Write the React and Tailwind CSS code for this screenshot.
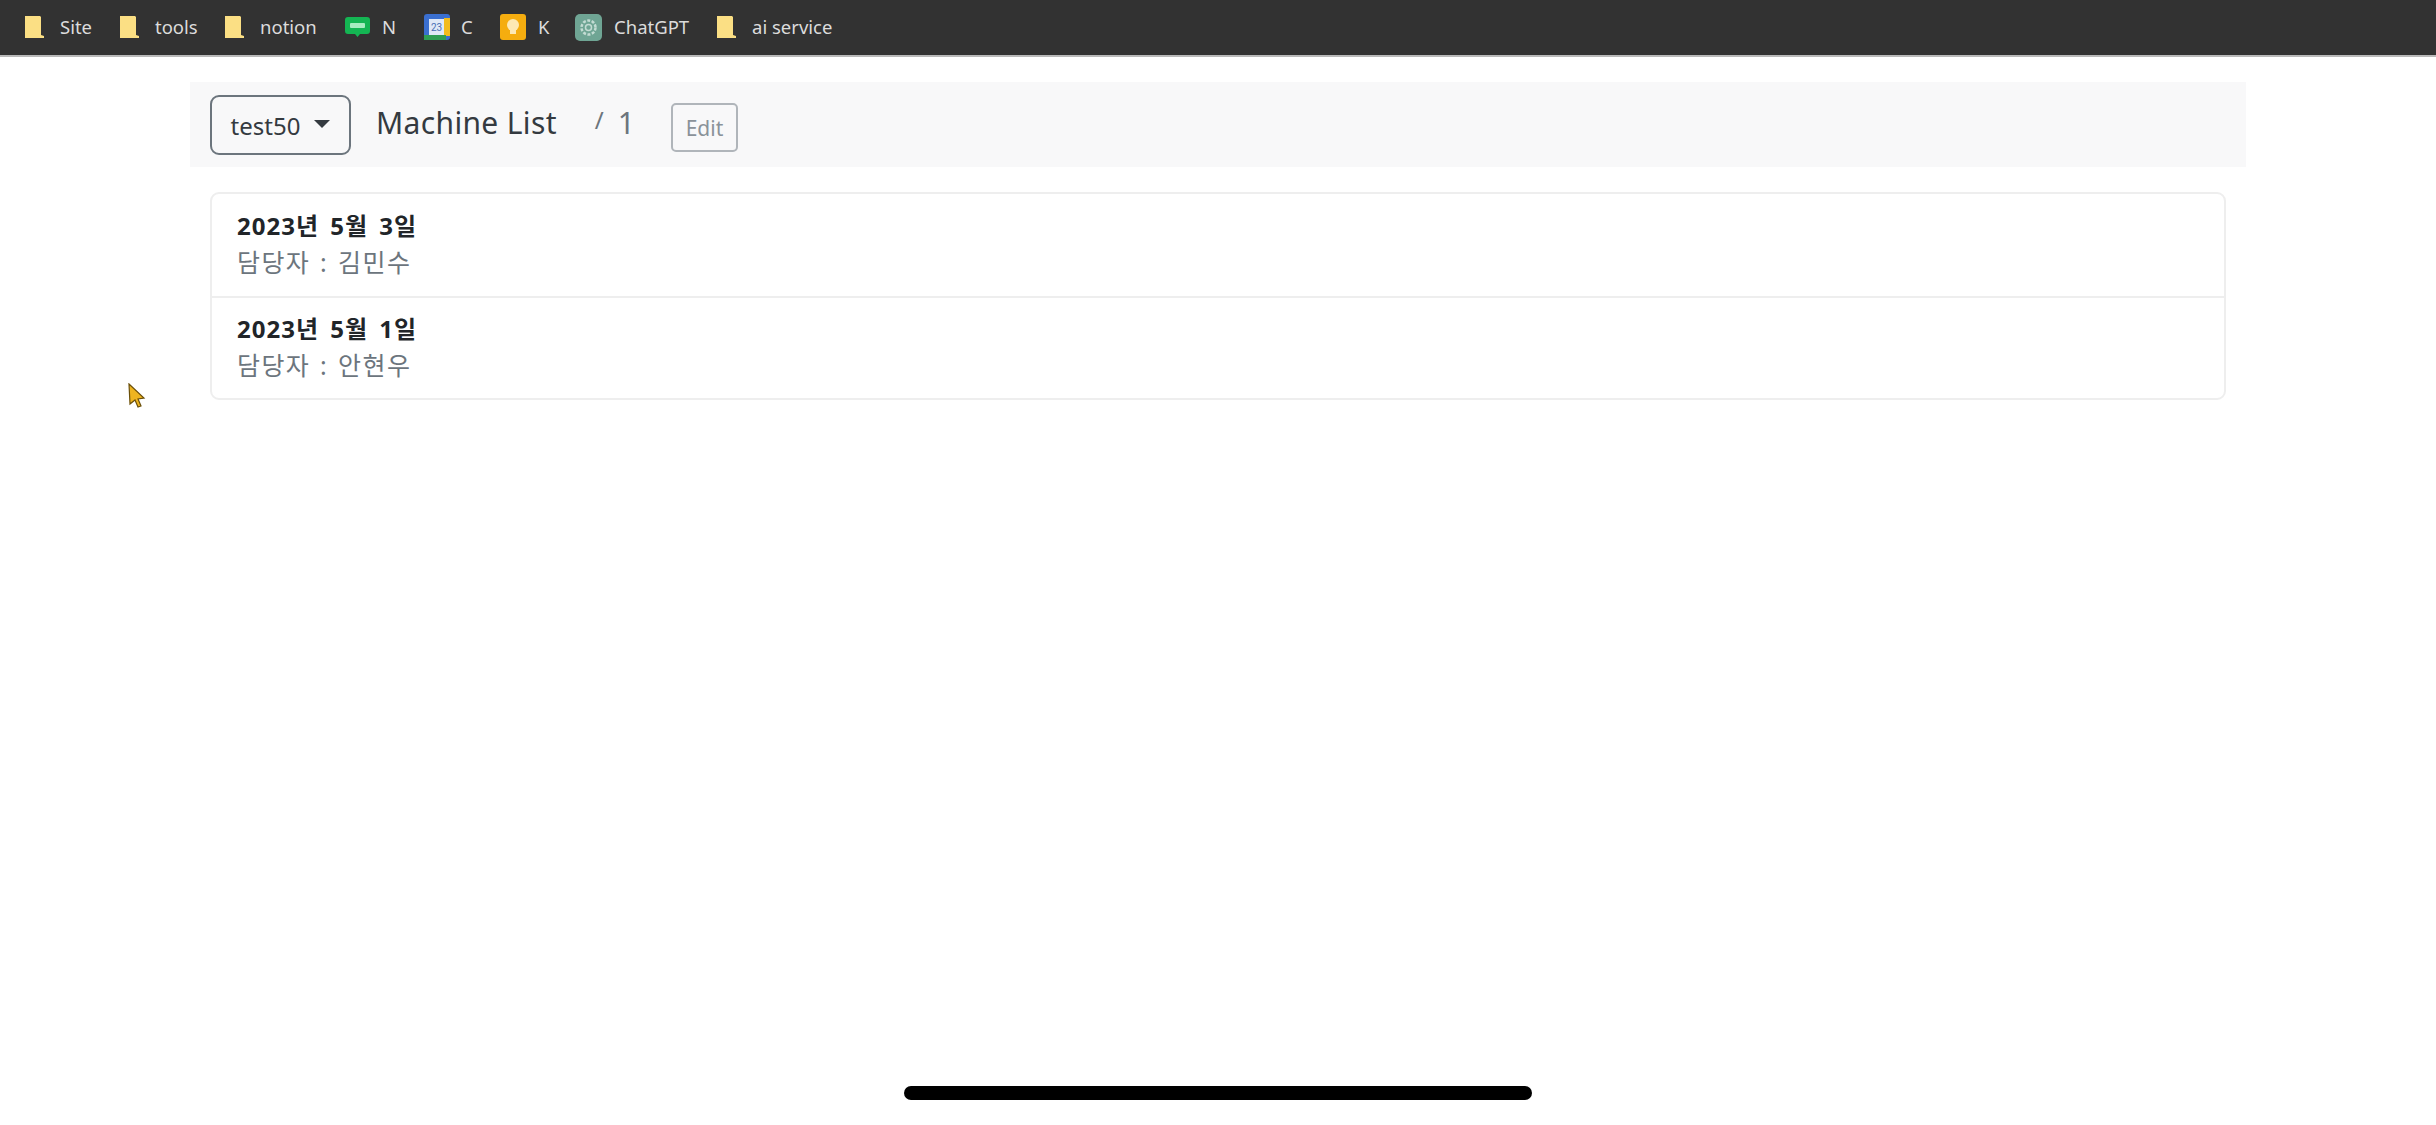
const font = 'font-["Noto_Sans","Noto_Sans_CJK_KR",sans-serif]';

function FolderIcon() {
  return (
    <svg width="21" height="24" viewBox="0 0 21 24" className="shrink-0">
      <path d="M1 1h15l1 1v18l3 1v2H1z" fill="#fbdf84" />
    </svg>
  );
}

function BlogIcon() {
  return (
    <svg width="27" height="24" viewBox="0 0 27 24" className="shrink-0">
      <path d="M4 2h19a3 3 0 0 1 3 3v11a3 3 0 0 1-3 3h-7l-2.500 3-2.500-3H4a3 3 0 0 1-3-3V5a3 3 0 0 1 3-3z" fill="#14b553" />
      <rect x="6" y="8" width="15" height="5" rx="1" fill="#a6ecc0" />
    </svg>
  );
}

function CalendarIcon() {
  return (
    <svg width="26" height="26" viewBox="0 0 26 26" className="shrink-0">
      <rect x="0" y="0" width="26" height="26" rx="3" fill="#3a6fd0" />
      <rect x="20" y="4" width="6" height="18" fill="#f2bb1d" />
      <rect x="0" y="21" width="22" height="5" fill="#2f9e54" />
      <rect x="5" y="5" width="15" height="16" fill="#dfe8f7" />
      <text x="12.500" y="17" textAnchor="middle" fontSize="10" fontFamily="Roboto, sans-serif" fill="#4a6fb5">23</text>
    </svg>
  );
}

function KeepIcon() {
  return (
    <svg width="26" height="26" viewBox="0 0 26 26" className="shrink-0">
      <rect width="26" height="26" rx="3" fill="#f5ad0f" />
      <circle cx="13" cy="11" r="6" fill="#fde9b5" />
      <rect x="10" y="16" width="6" height="4" fill="#fde9b5" />
    </svg>
  );
}

function GptIcon() {
  return (
    <svg width="27" height="27" viewBox="0 0 27 27" className="shrink-0">
      <rect width="27" height="27" rx="5" fill="#6fa594" />
      <circle cx="13.500" cy="13.500" r="7" fill="none" stroke="#c3dcd3" strokeWidth="2.500" strokeDasharray="3 1.500" />
      <circle cx="13.500" cy="13.500" r="3" fill="none" stroke="#c3dcd3" strokeWidth="1.500" />
    </svg>
  );
}

const bookmarks = [
  { label: 'Site', icon: <FolderIcon />, box: 'w-[95px] gap-[15px]' },
  { label: 'tools', icon: <FolderIcon />, box: 'w-[105px] gap-[15px]' },
  { label: 'notion', icon: <FolderIcon />, box: 'w-[120px] gap-[15px]' },
  { label: 'N', icon: <BlogIcon />, box: 'w-[80px] gap-[11px]' },
  { label: 'C', icon: <CalendarIcon />, box: 'w-[76px] gap-[11px]' },
  { label: 'K', icon: <KeepIcon />, box: 'w-[75px] gap-[12px]' },
  { label: 'ChatGPT', icon: <GptIcon />, box: 'w-[141px] gap-[12px]' },
  { label: 'ai service', icon: <FolderIcon />, box: 'w-[120px] gap-[15px]' },
];

const records = [
  { date: '2023년 5월 3일', manager: '담당자 : 김민수' },
  { date: '2023년 5월 1일', manager: '담당자 : 안현우' },
];

export default function App() {
  return (
    <div className={`relative flex h-screen flex-col overflow-hidden bg-white ${font}`}>
      {/* bookmark bar */}
      <div className="flex h-[57px] shrink-0 items-center border-b-2 border-[#b9b9b9] bg-[#323232] pb-[1px] pl-[24px]">
        {bookmarks.map((b) => (
          <div key={b.label} className={`flex items-center ${b.box}`}>
            {b.icon}
            <span className="text-[18.500px] leading-none text-[#dcdcdc]">{b.label}</span>
          </div>
        ))}
      </div>

      <div className="mx-[190px] mt-[25px] flex h-[85px] items-center bg-[#f8f8f9] px-[20px]">
        <button className="flex h-[60px] w-[141px] items-center justify-center gap-[14px] rounded-[9px] border-2 border-[#6c757d] pt-[3px] text-[24px] text-[#343a40]">
          test50
          <span className="h-0 w-0 -translate-y-[2px] border-x-[8px] border-t-[8px] border-x-transparent border-t-[#343a40]" />
        </button>
        <span className="ml-[25px] -translate-y-[2px] text-[30px] tracking-[0.35px] text-[#343a40]">Machine List</span>
        <span className="ml-[38px] -translate-y-[5px] text-[24px] text-[#6c757d]">/</span>
        <span className="ml-[14px] -translate-y-[2px] text-[30px] text-[#6c757d]">1</span>
        <button className="ml-[36px] mt-[6px] h-[49px] w-[67px] rounded-[5px] border-2 border-[#b0b5ba] pt-[2px] text-[21px] text-[#8a9299]">
          Edit
        </button>
      </div>

      <ul className="mx-[210px] mt-[25px] rounded-[9px] border-2 border-[#eeeeee]">
        {records.map((r, i) => (
          <li key={r.date} className={`h-[102px] px-[25px] ${i > 0 ? 'border-t-2 border-[#eeeeee] pt-[12px]' : 'pt-[13px]'}`}>
            <div className="text-[24px] leading-[37px] font-bold tracking-[1px] text-[#212529] [word-spacing:4px]">{r.date}</div>
            <div className="text-[25px] leading-[37px] tracking-[1.400px] text-[#6c757d] [word-spacing:2px]">{r.manager}</div>
          </li>
        ))}
      </ul>

      {/* home indicator */}
      <div className="mx-auto mt-auto mb-[25px] h-[14px] w-[628px] rounded-full bg-black" />

      {/* mouse pointer */}
      <svg width="18" height="26" viewBox="0 0 18 26" className="absolute left-[128px] top-[383px]">
        <path d="M1 1l15 14-6 1 3 7-3 1-3-7-5 4z" fill="#eeb420" stroke="#6a4f0a" strokeWidth="1.200" />
      </svg>
    </div>
  );
}
